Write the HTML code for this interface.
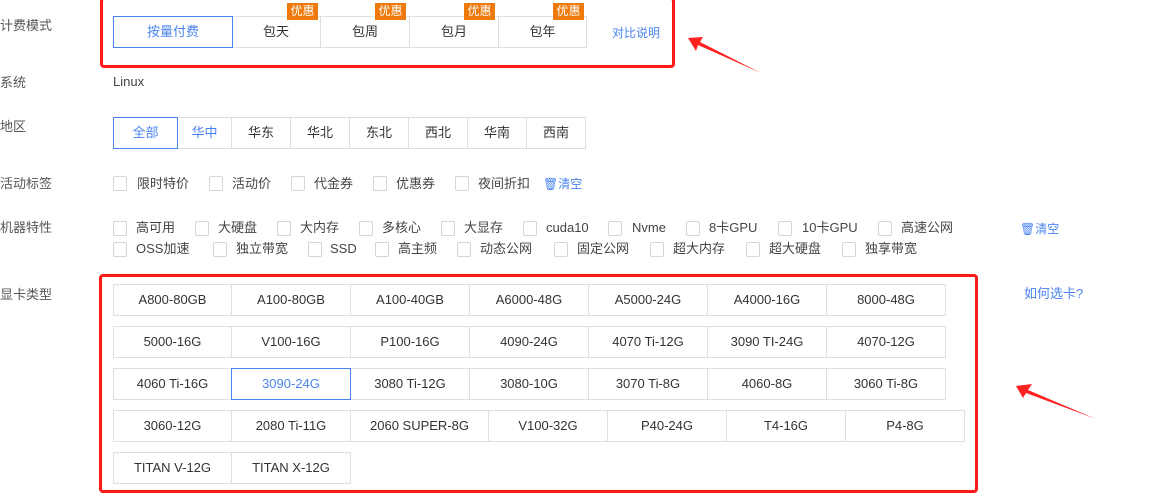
<!DOCTYPE html>
<html><head><meta charset="utf-8"><style>
body{margin:0;width:1164px;height:498px;background:#fff;position:relative;overflow:hidden;font-family:"Liberation Sans","Noto Sans CJK SC",sans-serif;font-size:13px;color:#333}
div,span{position:absolute;box-sizing:border-box}
.l{left:0;color:#555;font-size:13px;line-height:16px}
.b{border:1px solid #dcdfe6;text-align:center;background:#fff;color:#333;font-size:13px}
.b1{height:32px;line-height:30px}
.sel{border-color:#4a83f0;color:#4a83f0;z-index:2}
.cb{width:14px;height:15px;border:1px solid #d5d5d5;border-radius:2px}
.t{font-size:13px;color:#444;line-height:16px}
.bl{color:#4a83f0;line-height:16px}
.bd{width:31px;height:17px;background:#ee7a0b;color:#fff;font-size:12px;line-height:17px;text-align:center;z-index:3}
.rb{border:3px solid #ff1a1a;border-radius:4px}
</style></head><body>
<div class="l" style="top:18px">计费模式</div>
<div class="l" style="top:75px">系统</div>
<div class="l" style="top:119px">地区</div>
<div class="l" style="top:176px">活动标签</div>
<div class="l" style="top:220px">机器特性</div>
<div class="l" style="top:287px">显卡类型</div>

<div class="rb" style="left:100px;top:-3px;width:575px;height:71px"></div>
<div class="b b1 sel" style="left:113px;top:16px;width:120px">按量付费</div>
<div class="b b1" style="left:231px;top:16px;width:90px">包天</div>
<div class="b b1" style="left:320px;top:16px;width:90px">包周</div>
<div class="b b1" style="left:409px;top:16px;width:90px">包月</div>
<div class="b b1" style="left:498px;top:16px;width:89px">包年</div>
<div class="bd" style="left:287px;top:3px">优惠</div>
<div class="bd" style="left:375px;top:3px">优惠</div>
<div class="bd" style="left:464px;top:3px">优惠</div>
<div class="bd" style="left:553px;top:3px">优惠</div>
<div class="bl" style="left:612px;top:25px;font-size:12px">对比说明</div>

<div class="t" style="left:113px;top:74px">Linux</div>

<div class="b b1 sel" style="left:113px;top:117px;width:65px">全部</div>
<div class="b b1 bl" style="left:177px;top:117px;width:55px;color:#4a83f0;line-height:30px">华中</div>
<div class="b b1" style="left:231px;top:117px;width:60px">华东</div>
<div class="b b1" style="left:290px;top:117px;width:60px">华北</div>
<div class="b b1" style="left:349px;top:117px;width:60px">东北</div>
<div class="b b1" style="left:408px;top:117px;width:60px">西北</div>
<div class="b b1" style="left:467px;top:117px;width:60px">华南</div>
<div class="b b1" style="left:526px;top:117px;width:60px">西南</div>

<div class="cb" style="left:113px;top:176px"></div><div class="t" style="left:137px;top:176px">限时特价</div>
<div class="cb" style="left:209px;top:176px"></div><div class="t" style="left:232px;top:176px">活动价</div>
<div class="cb" style="left:291px;top:176px"></div><div class="t" style="left:314px;top:176px">代金券</div>
<div class="cb" style="left:373px;top:176px"></div><div class="t" style="left:396px;top:176px">优惠券</div>
<div class="cb" style="left:455px;top:176px"></div><div class="t" style="left:478px;top:176px">夜间折扣</div>
<div class="bl" style="left:543px;top:176px;font-size:12px">🗑清空</div>

<div class="cb" style="left:113px;top:221px"></div><div class="t" style="left:136px;top:220px">高可用</div>
<div class="cb" style="left:195px;top:221px"></div><div class="t" style="left:218px;top:220px">大硬盘</div>
<div class="cb" style="left:277px;top:221px"></div><div class="t" style="left:300px;top:220px">大内存</div>
<div class="cb" style="left:359px;top:221px"></div><div class="t" style="left:382px;top:220px">多核心</div>
<div class="cb" style="left:441px;top:221px"></div><div class="t" style="left:464px;top:220px">大显存</div>
<div class="cb" style="left:523px;top:221px"></div><div class="t" style="left:546px;top:220px">cuda10</div>
<div class="cb" style="left:608px;top:221px"></div><div class="t" style="left:632px;top:220px">Nvme</div>
<div class="cb" style="left:686px;top:221px"></div><div class="t" style="left:709px;top:220px">8卡GPU</div>
<div class="cb" style="left:778px;top:221px"></div><div class="t" style="left:802px;top:220px">10卡GPU</div>
<div class="cb" style="left:878px;top:221px"></div><div class="t" style="left:901px;top:220px">高速公网</div>
<div class="bl" style="left:1020px;top:221px;font-size:12px">🗑清空</div>

<div class="cb" style="left:113px;top:242px"></div><div class="t" style="left:136px;top:241px">OSS加速</div>
<div class="cb" style="left:213px;top:242px"></div><div class="t" style="left:236px;top:241px">独立带宽</div>
<div class="cb" style="left:308px;top:242px"></div><div class="t" style="left:330px;top:241px">SSD</div>
<div class="cb" style="left:375px;top:242px"></div><div class="t" style="left:398px;top:241px">高主频</div>
<div class="cb" style="left:457px;top:242px"></div><div class="t" style="left:480px;top:241px">动态公网</div>
<div class="cb" style="left:554px;top:242px"></div><div class="t" style="left:577px;top:241px">固定公网</div>
<div class="cb" style="left:650px;top:242px"></div><div class="t" style="left:673px;top:241px">超大内存</div>
<div class="cb" style="left:746px;top:242px"></div><div class="t" style="left:769px;top:241px">超大硬盘</div>
<div class="cb" style="left:842px;top:242px"></div><div class="t" style="left:865px;top:241px">独享带宽</div>

<div class="rb" style="left:99px;top:274px;width:879px;height:219px"></div>
<div class="bl" style="left:1024px;top:286px">如何选卡?</div>

<div class="b b1" style="left:113px;top:284px;width:119px">A800-80GB</div>
<div class="b b1" style="left:231px;top:284px;width:120px">A100-80GB</div>
<div class="b b1" style="left:350px;top:284px;width:120px">A100-40GB</div>
<div class="b b1" style="left:469px;top:284px;width:120px">A6000-48G</div>
<div class="b b1" style="left:588px;top:284px;width:120px">A5000-24G</div>
<div class="b b1" style="left:707px;top:284px;width:120px">A4000-16G</div>
<div class="b b1" style="left:826px;top:284px;width:120px">8000-48G</div>

<div class="b b1" style="left:113px;top:326px;width:119px">5000-16G</div>
<div class="b b1" style="left:231px;top:326px;width:120px">V100-16G</div>
<div class="b b1" style="left:350px;top:326px;width:120px">P100-16G</div>
<div class="b b1" style="left:469px;top:326px;width:120px">4090-24G</div>
<div class="b b1" style="left:588px;top:326px;width:120px">4070 Ti-12G</div>
<div class="b b1" style="left:707px;top:326px;width:120px">3090 TI-24G</div>
<div class="b b1" style="left:826px;top:326px;width:120px">4070-12G</div>

<div class="b b1" style="left:113px;top:368px;width:119px">4060 Ti-16G</div>
<div class="b b1 sel" style="left:231px;top:368px;width:120px">3090-24G</div>
<div class="b b1" style="left:350px;top:368px;width:120px">3080 Ti-12G</div>
<div class="b b1" style="left:469px;top:368px;width:120px">3080-10G</div>
<div class="b b1" style="left:588px;top:368px;width:120px">3070 Ti-8G</div>
<div class="b b1" style="left:707px;top:368px;width:120px">4060-8G</div>
<div class="b b1" style="left:826px;top:368px;width:120px">3060 Ti-8G</div>

<div class="b b1" style="left:113px;top:410px;width:119px">3060-12G</div>
<div class="b b1" style="left:231px;top:410px;width:120px">2080 Ti-11G</div>
<div class="b b1" style="left:350px;top:410px;width:139px">2060 SUPER-8G</div>
<div class="b b1" style="left:488px;top:410px;width:120px">V100-32G</div>
<div class="b b1" style="left:607px;top:410px;width:120px">P40-24G</div>
<div class="b b1" style="left:726px;top:410px;width:120px">T4-16G</div>
<div class="b b1" style="left:845px;top:410px;width:120px">P4-8G</div>

<div class="b b1" style="left:113px;top:452px;width:119px">TITAN V-12G</div>
<div class="b b1" style="left:231px;top:452px;width:120px">TITAN X-12G</div>

<svg style="position:absolute;left:0;top:0" width="1164" height="498">
<polygon points="688,38 703,37 700,42 761,73 698,45 696,51" fill="#f22"/>
<polygon points="1016,386 1032,384 1028,390 1096,419 1026,393 1023,398" fill="#f22"/>
</svg>
</body></html>
